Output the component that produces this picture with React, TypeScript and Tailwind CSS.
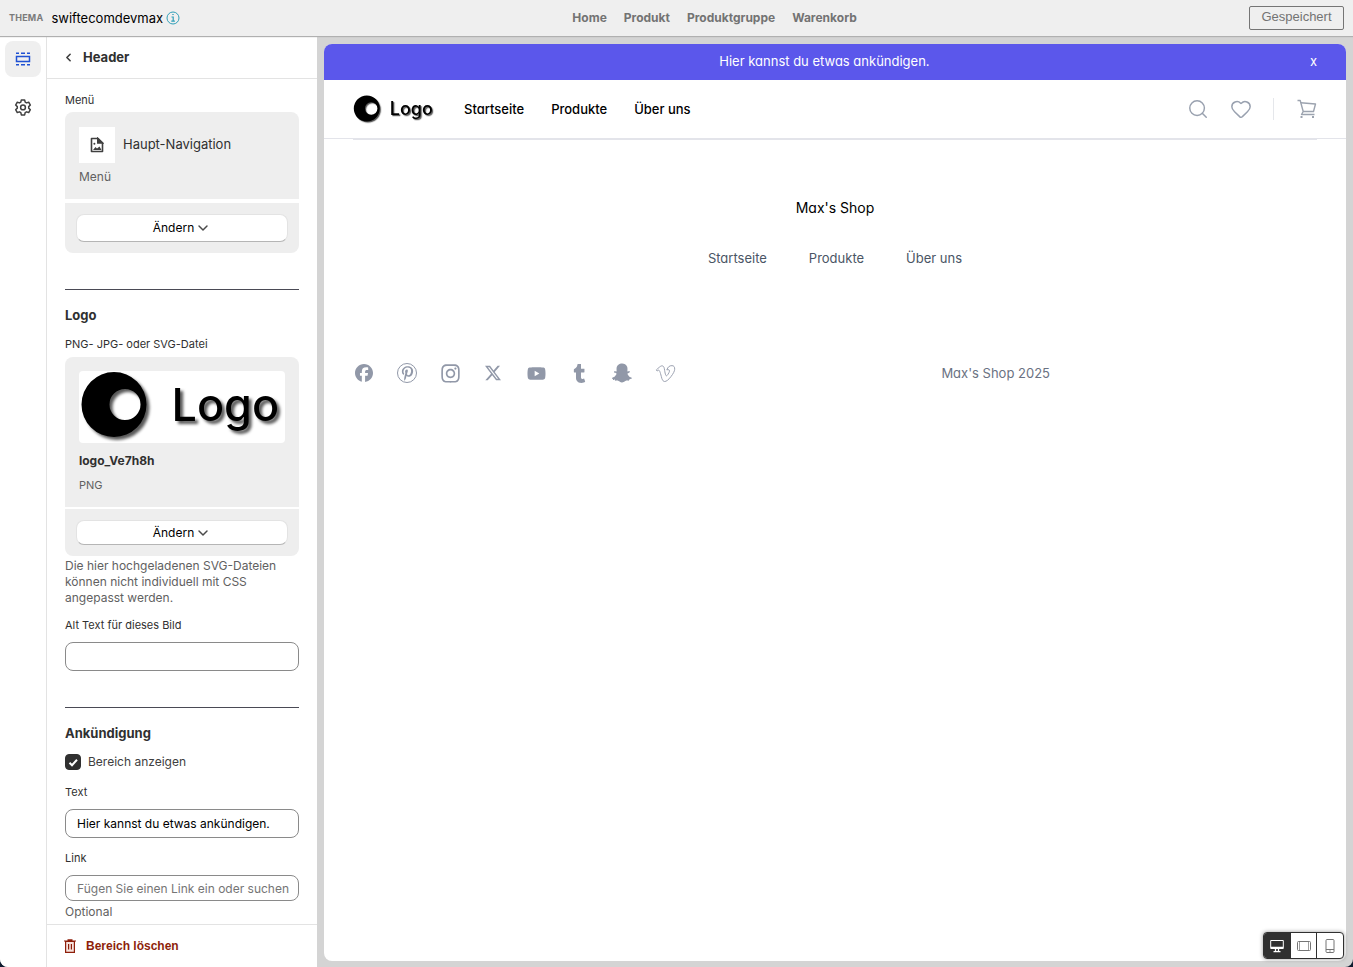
import { useState } from 'react';
import { ChevronDown, ChevronLeft, Heart, Search } from 'lucide-react';
import { BsTwitterX } from 'react-icons/bs';
import { FaSnapchatGhost } from 'react-icons/fa';
import { FaFacebook, FaInstagram, FaPinterestP, FaTumblr, FaVimeoV, FaYoutube } from 'react-icons/fa6';

const pages = ['Home', 'Produkt', 'Produktgruppe', 'Warenkorb'];
const menuItems = ['Startseite', 'Produkte', 'Über uns'];

const labelClass = 'block text-[11px] leading-4 text-[#303030]';
const inputClass = 'block w-full rounded-lg border border-[#8a8a8a] bg-white pl-[11px] text-xs text-black placeholder:text-[#757575]';

function ShopLogo({ className }: { className?: string }) {
    return (
        <svg viewBox="0 0 205 72" className={className} role="img" aria-label="Logo">
            <g style={{ filter: 'drop-shadow(3px 3px 1.5px rgba(0,0,0,0.65))' }}>
                <path
                    fillRule="evenodd"
                    d="M34.5 1a32.5 32.5 0 1 0 0 65a32.5 32.5 0 1 0 0-65zM45.5 18a15.5 15.5 0 1 1 0 31a15.5 15.5 0 1 1 0-31z"
                />
                <text x="92" y="50" fontFamily="Inter, sans-serif" fontSize="45" fontWeight="500">
                    Logo
                </text>
            </g>
        </svg>
    );
}

function SectionsIcon() {
    return (
        <svg viewBox="0 0 16 14" className="h-[14px] w-4" fill="none" stroke="#1f51d3" strokeWidth="1.5">
            <path d="M1.5 4.5h13v5h-13z" />
            <path d="M1 1.2h3M6 1.2h4M12 1.2h3M1 12.8h3M6 12.8h4M12 12.8h3" />
        </svg>
    );
}

function GearIcon() {
    return (
        <svg viewBox="0 0 24 24" className="size-[18px]" fill="none" stroke="#404040" strokeWidth="2" strokeLinejoin="round">
            <path d="M9.8 2.5h4.4l.7 3 1.8 1 2.9-.9 2.2 3.8-2.2 2.1v2l2.2 2.1-2.2 3.8-2.9-.9-1.8 1-.7 3H9.8l-.7-3-1.8-1-2.9.9-2.2-3.8 2.2-2.1v-2L2.2 9.4l2.2-3.8 2.9.9 1.8-1z" />
            <circle cx="12" cy="12.5" r="3.2" />
        </svg>
    );
}

function FileImageIcon() {
    return (
        <svg viewBox="0 0 14 16" className="h-4 w-[14px]" fill="none" stroke="#404040" strokeWidth="1.6">
            <path d="M1.5 1.5H8L12.500 6v8.500h-11z" strokeLinejoin="round" />
            <path d="M7.8 1.5V6h4.700z" fill="#404040" />
            <path d="M3 13l2.500-3L7 11.500l2.500-2 2 3.500z" fill="#404040" stroke="none" />
            <circle cx="4.4" cy="6.8" r="1" fill="#404040" stroke="none" />
        </svg>
    );
}

function CartIcon() {
    return (
        <svg viewBox="0 0 20 20" className="size-5" fill="none" stroke="#9ca3af" strokeWidth="1.4" strokeLinejoin="round">
            <path d="M.5 1.5h2.700l3 11L4.500 15.500h13" />
            <path d="M3.800 3.700L18.500 5l-2 7.500H6" />
            <path d="M3.5 17h2v2h-2zM15 17h2v2h-2z" fill="#9ca3af" stroke="none" />
        </svg>
    );
}

function TrashIcon() {
    return (
        <svg viewBox="0 0 12 14" className="h-[14px] w-3" fill="#f6e2dd" stroke="#8e1f0b" strokeWidth="1.2">
            <path d="M1.6 2.5h8.800v10.800H1.600z" />
            <path d="M0 2h12M3.500.8h5M4.600 5v5.500M7.400 5v5.500" />
        </svg>
    );
}

function ChangeButton({ className }: { className: string }) {
    return (
        <div className="rounded-b-lg bg-[#eeeeee] px-[11px] py-[11px]">
            <button
                type="button"
                className={`flex w-full items-center justify-center gap-px rounded-lg border border-[#e3e3e3] border-b-[#b5b5b5] bg-white text-xs text-black ${className}`}
            >
                Ändern
                <ChevronDown className="size-4" strokeWidth={2.2} color="#4a4a4a" />
            </button>
        </div>
    );
}

function TopBar() {
    return (
        <header className="relative z-10 flex h-9 shrink-0 items-center justify-between bg-[#efefef] px-[9px] shadow-[0_1px_1px_#b0b0b0]">
            <div className="flex items-center">
                <span className="mr-2 text-[9px] font-bold tracking-wide text-[#7b7b7b]">THEMA</span>
                <span className="text-[13px] leading-5 text-black">swiftecomdevmax</span>
                <svg viewBox="0 0 14 14" className="ml-[3px] size-[14px]" fill="none" stroke="#2f9fb8">
                    <circle cx="7" cy="7" r="6" />
                    <path d="M5.5 6h1.700v4M5.300 10.200h3.600M6.300 3.500h1.400" strokeWidth="1.2" />
                </svg>
            </div>
            <nav className="flex justify-center gap-[17px] text-xs font-bold text-[#737373]">
                {pages.map((page) => (
                    <a key={page} href="#">{page}</a>
                ))}
            </nav>
            <button
                type="button"
                className="h-6 w-[95px] rounded-xs border border-[#757575] pb-0.5 font-['Liberation_Sans',Arial,sans-serif] text-[13px] text-[#737373]"
            >
                Gespeichert
            </button>
        </header>
    );
}

function SettingsPanel({ text, setText }: { text: string; setText: (value: string) => void }) {
    const [visible, setVisible] = useState(true);

    return (
        <aside className="flex w-[271px] shrink-0 flex-col border-l border-[#e3e3e3] bg-white">
            <div className="flex h-[43px] shrink-0 items-center gap-2 border-b border-[#e3e3e3] px-[15px]">
                <button type="button" aria-label="Zurück">
                    <ChevronLeft className="size-[13px]" strokeWidth={3} color="#404040" />
                </button>
                <h2 className="text-[13px] leading-5 font-bold text-[#303030]">Header</h2>
            </div>

            <div className="min-h-0 flex-1 overflow-hidden px-[18px] pt-[13px]">
                <p className={labelClass}>Menü</p>
                <div className="mt-1 h-[87px] rounded-t-lg bg-[#eeeeee] px-[14px] pt-[15px]">
                    <div className="flex items-center gap-2">
                        <span className="flex size-9 items-center justify-center bg-white">
                            <FileImageIcon />
                        </span>
                        <span className="text-[13px] text-[#303030]">Haupt-Navigation</span>
                    </div>
                    <p className="mt-1.5 text-xs leading-4 text-[#616161]">Menü</p>
                </div>
                <div className="mt-1">
                    <ChangeButton className="h-7" />
                </div>

                <hr className="mt-9 border-[#4a4a55]" />
                <h3 className="mt-[15px] text-[13px] leading-5 font-bold text-[#303030]">Logo</h3>
                <p className={`mt-[11px] ${labelClass}`}>PNG- JPG- oder SVG-Datei</p>
                <div className="mt-[5px] h-[150px] rounded-t-lg bg-[#eeeeee] px-[14px] pt-[14px]">
                    <div className="rounded-sm bg-white">
                        <ShopLogo className="h-[72px] w-full" />
                    </div>
                    <p className="mt-[10px] text-xs leading-4 font-bold text-[#303030]">logo_Ve7h8h</p>
                    <p className="mt-2 text-[11px] leading-4 text-[#616161]">PNG</p>
                </div>
                <div className="mt-0.5">
                    <ChangeButton className="h-[25px]" />
                </div>
                <p className="mt-0.5 text-xs leading-4 text-[#616161]">
                    Die hier hochgeladenen SVG-Dateien können nicht individuell mit CSS angepasst werden.
                </p>
                <label htmlFor="alt-text" className={`mt-[11px] ${labelClass}`}>Alt Text für dieses Bild</label>
                <input id="alt-text" className={`mt-[9px] h-[29px] ${inputClass}`} />

                <hr className="mt-9 border-[#4a4a55]" />
                <h3 className="mt-[15px] text-[13px] leading-5 font-bold text-[#303030]">Ankündigung</h3>
                <label className="mt-[9px] flex h-5 items-center gap-[7px] text-xs text-[#404040]">
                    <span className="grid">
                        <input
                            type="checkbox"
                            checked={visible}
                            onChange={(e) => setVisible(e.target.checked)}
                            className="peer col-start-1 row-start-1 size-4 appearance-none rounded-sm border border-[#8a8a8a] checked:border-[#303030] checked:bg-[#303030]"
                        />
                        <svg
                            viewBox="0 0 16 16"
                            className="pointer-events-none invisible col-start-1 row-start-1 size-4 peer-checked:visible"
                            fill="none"
                            stroke="white"
                            strokeWidth="2"
                        >
                            <path d="M4.5 8.8L7 11.200l5-5.400" />
                        </svg>
                    </span>
                    Bereich anzeigen
                </label>
                <label htmlFor="text" className={`mt-3 ${labelClass}`}>Text</label>
                <input id="text" value={text} onChange={(e) => setText(e.target.value)} className={`mt-[9px] h-[29px] ${inputClass}`} />
                <label htmlFor="link" className={`mt-3 ${labelClass}`}>Link</label>
                <input id="link" placeholder="Fügen Sie einen Link ein oder suchen" className={`mt-[9px] h-[26px] ${inputClass}`} />
                <p className="mt-[3px] text-xs leading-4 text-[#616161]">Optional</p>
            </div>

            <div className="flex h-[43px] shrink-0 items-center border-t border-[#e3e3e3] px-[17px]">
                <button type="button" className="flex items-center gap-[10px] font-['Liberation_Sans',Arial,sans-serif] text-xs font-bold text-[#8e1f0b]">
                    <TrashIcon />
                    Bereich löschen
                </button>
            </div>
        </aside>
    );
}

function ShopPreview({ announcement }: { announcement: string }) {
    return (
        <div className="flex-1 overflow-hidden rounded-lg bg-white [font-feature-settings:'cv11']">
            <div className="flex h-9 items-center gap-[14px] bg-[#5b57eb] px-[29px] text-[13px] text-white">
                <p className="flex-1 text-center">{announcement}</p>
                <button type="button">x</button>
            </div>

            <div className="flex h-[59px] items-center border-b border-[#e3e4ea] px-[29px]">
                <ShopLogo className="h-[29px] w-[82px]" />
                <nav className="ml-[29px] flex gap-[27px] text-[13px] leading-5 font-medium text-black">
                    {menuItems.map((item) => (
                        <a key={item} href="#">{item}</a>
                    ))}
                </nav>
                <div className="ml-auto flex items-center">
                    <button type="button" aria-label="Suche">
                        <Search className="size-[22px] text-gray-400" strokeWidth={1.6} />
                    </button>
                    <button type="button" aria-label="Wunschliste" className="ml-[21px]">
                        <Heart className="size-[22px] text-gray-400" strokeWidth={1.6} />
                    </button>
                    <span className="ml-[21px] h-[22px] w-px bg-gray-200" />
                    <button type="button" aria-label="Warenkorb" className="ml-[23px]">
                        <CartIcon />
                    </button>
                </div>
            </div>

            <footer className="mx-[29px] border-t border-[#e3e4ea]">
                <p className="mt-14 text-center text-sm leading-6 text-black">Max's Shop</p>
                <nav className="mt-7 flex justify-center gap-[42px] text-[13px] leading-5 text-gray-600">
                    {menuItems.map((item) => (
                        <a key={item} href="#">{item}</a>
                    ))}
                </nav>
                <div className="mt-[94px] flex items-center justify-between">
                    <div className="flex items-center gap-[21px] text-[#9198a8]">
                        <a href="#" aria-label="Facebook" className="flex w-[22px] justify-center"><FaFacebook className="size-[18px]" /></a>
                        <a href="#" aria-label="Pinterest" className="flex size-[22px] items-center justify-center">
                            <span className="flex size-5 items-center justify-center rounded-full border border-[#9198a8]">
                                <FaPinterestP className="size-[15px]" />
                            </span>
                        </a>
                        <a href="#" aria-label="Instagram" className="flex w-[22px] justify-center"><FaInstagram className="size-[21px]" /></a>
                        <a href="#" aria-label="X" className="flex w-[22px] justify-center"><BsTwitterX className="size-4" /></a>
                        <a href="#" aria-label="YouTube" className="flex w-[22px] justify-center"><FaYoutube className="size-[19px]" /></a>
                        <a href="#" aria-label="Tumblr" className="flex w-[22px] justify-center"><FaTumblr className="size-[19px]" /></a>
                        <a href="#" aria-label="Snapchat" className="flex w-[22px] justify-center"><FaSnapchatGhost className="size-5" /></a>
                        <a href="#" aria-label="Vimeo" className="flex w-[22px] justify-center">
                            <FaVimeoV className="size-[21px] overflow-visible fill-none stroke-current stroke-[22]" />
                        </a>
                    </div>
                    <p className="pr-[267px] text-[13px] leading-5 text-gray-500">Max's Shop 2025</p>
                </div>
            </footer>
        </div>
    );
}

function DeviceSwitch() {
    return (
        <div className="absolute right-[9px] bottom-2 flex h-[27px] w-[81px] divide-x divide-[#303030] overflow-hidden rounded-sm border border-[#303030] bg-white shadow-[0_0_4px_rgba(0,0,0,0.4)]">
            <button type="button" aria-label="Desktop" className="flex flex-1 items-center justify-center bg-[#303030]">
                <svg viewBox="0 0 14 14" className="size-[14px]" fill="none" stroke="white">
                    <path d="M.7 1.5h12.600v8H.7z" />
                    <path d="M1 8.500h12" strokeWidth="1.5" />
                    <path d="M5.500 10v2.500M8.500 10v2.500M3.500 12.700h7" strokeWidth="1.3" />
                </svg>
            </button>
            <button type="button" aria-label="Tablet" className="flex flex-1 items-center justify-center">
                <svg viewBox="0 0 14 12" className="h-3 w-[14px]" fill="none" stroke="#757575">
                    <rect x=".5" y="1.5" width="13" height="9" rx="1" />
                    <path d="M2.500 1.500v9M11.500 1.500v9" strokeWidth=".7" />
                </svg>
            </button>
            <button type="button" aria-label="Smartphone" className="flex flex-1 items-center justify-center">
                <svg viewBox="0 0 10 14" className="h-[14px] w-[10px]" fill="none" stroke="#757575">
                    <rect x="1" y=".5" width="8" height="13" rx="1" />
                    <path d="M1 10.500h8M4.300 12h1.400" />
                </svg>
            </button>
        </div>
    );
}

export default function App() {
    const [announcement, setAnnouncement] = useState('Hier kannst du etwas ankündigen.');

    return (
        <div className="h-screen bg-[#0f1c30] font-[Inter,sans-serif]">
            <div className="flex h-full flex-col overflow-hidden rounded-b-lg bg-[#d4d4d4]">
                <TopBar />
                <div className="flex min-h-0 flex-1">
                    <nav className="flex w-[46px] shrink-0 flex-col items-center gap-3 bg-white pt-[5px]">
                        <button type="button" aria-label="Bereiche" className="flex size-9 items-center justify-center rounded-lg bg-[#efefef]">
                            <SectionsIcon />
                        </button>
                        <button type="button" aria-label="Einstellungen" className="flex size-9 items-center justify-center">
                            <GearIcon />
                        </button>
                    </nav>
                    <SettingsPanel text={announcement} setText={setAnnouncement} />
                    <main className="relative flex min-w-0 flex-1 pt-2 pr-[7px] pb-1.5 pl-[7px]">
                        <ShopPreview announcement={announcement} />
                        <DeviceSwitch />
                    </main>
                </div>
            </div>
        </div>
    );
}
